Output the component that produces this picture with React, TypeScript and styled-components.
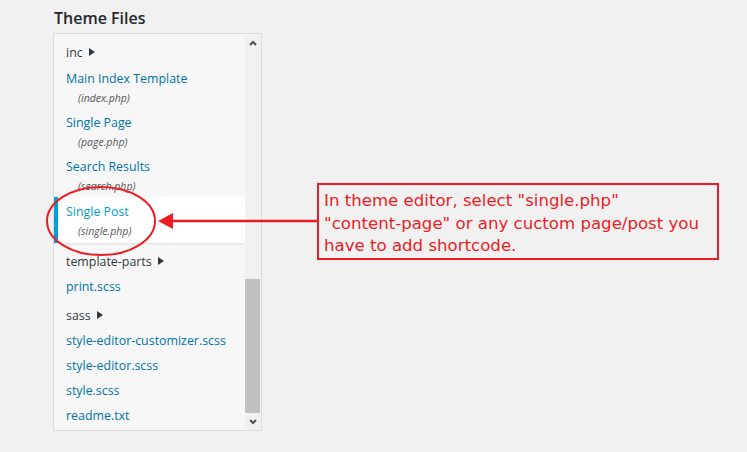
import styled, { createGlobalStyle } from 'styled-components'

const GlobalStyle = createGlobalStyle`
  html, body {
    margin: 0;
    background: #f1f1f1;
    font-family: "Open Sans", "Noto Sans", sans-serif;
  }
`

const Page = styled.div`
  position: relative;
  width: 747px;
  height: 452px;
  padding: 8px 0 0 53px;
  box-sizing: border-box;
  overflow: hidden;
`

const Title = styled.h2`
  margin: 0 0 5px 1px;
  font-size: 16px;
  line-height: 20px;
  font-weight: 600;
  color: #23282d;
`

const Panel = styled.div`
  display: flex;
  width: 209px;
  height: 398px;
  box-sizing: border-box;
  border: 1px solid #dcdcdc;
`

const List = styled.ul`
  flex: 1;
  margin: 0;
  padding: 2px 0 0;
  list-style: none;
  background: #f7f7f7;
  overflow: hidden;
`

const Folder = styled.li<{ $gap?: number }>`
  display: flex;
  align-items: center;
  gap: 6px;
  height: 25px;
  padding: 4px 0 0 12px;
  margin-top: ${p => p.$gap ?? 0}px;
  font-size: 12.4px;
  color: #32373c;
`

const Caret = styled.span`
  width: 0;
  height: 0;
  border-top: 4px solid transparent;
  border-bottom: 4px solid transparent;
  border-left: 6px solid #32373c;
  margin-top: -2px;
`

const File = styled.li`
  height: 25px;
  padding-left: 12px;
  font-size: 12.4px;
  line-height: 25px;
  color: #0073aa;
`

const Template = styled.li<{ $active?: boolean }>`
  padding: ${p => (p.$active ? '6px 0 3px 8px' : '5px 0 2px 12px')};
  background: ${p => (p.$active ? '#fff' : 'transparent')};
  border-left: ${p => (p.$active ? '4px solid #00a0d2' : 'none')};
  box-shadow: ${p => (p.$active ? '0 1px 2px rgba(0, 0, 0, 0.1)' : 'none')};
`

const Name = styled.div<{ $active?: boolean }>`
  font-size: 12.4px;
  line-height: 18px;
  color: ${p => (p.$active ? '#00a0d2' : '#0073aa')};
`

const Sub = styled.div`
  margin-top: 1px;
  padding-left: 12px;
  font-size: 10.5px;
  line-height: 18px;
  font-style: italic;
  color: #555;
`

const Scrollbar = styled.div`
  display: flex;
  flex-direction: column;
  width: 16px;
  background: #f1f1f1;
`

const ScrollButton = styled.div`
  display: flex;
  align-items: center;
  justify-content: center;
  height: 17px;
`

const Track = styled.div`
  flex: 1;
  display: flex;
  flex-direction: column;
  justify-content: flex-end;
`

const Thumb = styled.div`
  height: 134px;
  margin-right: 1px;
  background: #c1c1c1;
`

const Callout = styled.div`
  position: absolute;
  left: 317px;
  top: 183px;
  width: 402px;
  height: 77px;
  box-sizing: border-box;
  border: 2px solid #ed1c24;
  padding: 5px 0 0 5px;
  font-family: "DejaVu Sans", Verdana, sans-serif;
  font-size: 16.6px;
  line-height: 22.5px;
  color: #ed1c24;
  white-space: nowrap;
`

const Overlay = styled.svg`
  position: absolute;
  left: 0;
  top: 0;
  pointer-events: none;
`

function Chevron({ up }: { up?: boolean }) {
  return (
    <svg width='8' height='6' viewBox='0 0 8 6'>
      <path
        d={up ? 'M1 5 L4 2 L7 5' : 'M1 1 L4 4 L7 1'}
        fill='none'
        stroke='#505050'
        strokeWidth='2'
      />
    </svg>
  )
}

const templates = [
  { name: 'Main Index Template', file: 'index.php' },
  { name: 'Single Page', file: 'page.php' },
  { name: 'Search Results', file: 'search.php' },
  { name: 'Single Post', file: 'single.php', active: true }
]

const files = ['style-editor-customizer.scss', 'style-editor.scss', 'style.scss', 'readme.txt']

export default function App() {
  return (
    <Page>
      <GlobalStyle />
      <Title>Theme Files</Title>

      <Panel>
        <List>
          <Folder>inc <Caret /></Folder>

          {templates.map(t => (
            <Template key={t.file} $active={t.active}>
              <Name $active={t.active}>{t.name}</Name>
              <Sub>({t.file})</Sub>
            </Template>
          ))}

          <Folder $gap={2}>template-parts <Caret /></Folder>
          <File>print.scss</File>
          <Folder>sass <Caret /></Folder>
          {files.map(f => <File key={f}>{f}</File>)}
        </List>

        <Scrollbar>
          <ScrollButton><Chevron up /></ScrollButton>
          <Track><Thumb /></Track>
          <ScrollButton><Chevron /></ScrollButton>
        </Scrollbar>
      </Panel>

      {/* annotation */}
      <Overlay width='747' height='452'>
        <ellipse cx='101' cy='221' rx='54' ry='34' fill='none' stroke='#ed1c24' strokeWidth='2' />
        <line x1='170' y1='221' x2='318' y2='221' stroke='#ed1c24' strokeWidth='2.5' />
        <polygon points='158,221 173,213 173,229' fill='#ed1c24' />
      </Overlay>
      <Callout>
        In theme editor, select "single.php"<br />
        "content-page" or any cuctom page/post you<br />
        have to add shortcode.
      </Callout>
    </Page>
  )
}
